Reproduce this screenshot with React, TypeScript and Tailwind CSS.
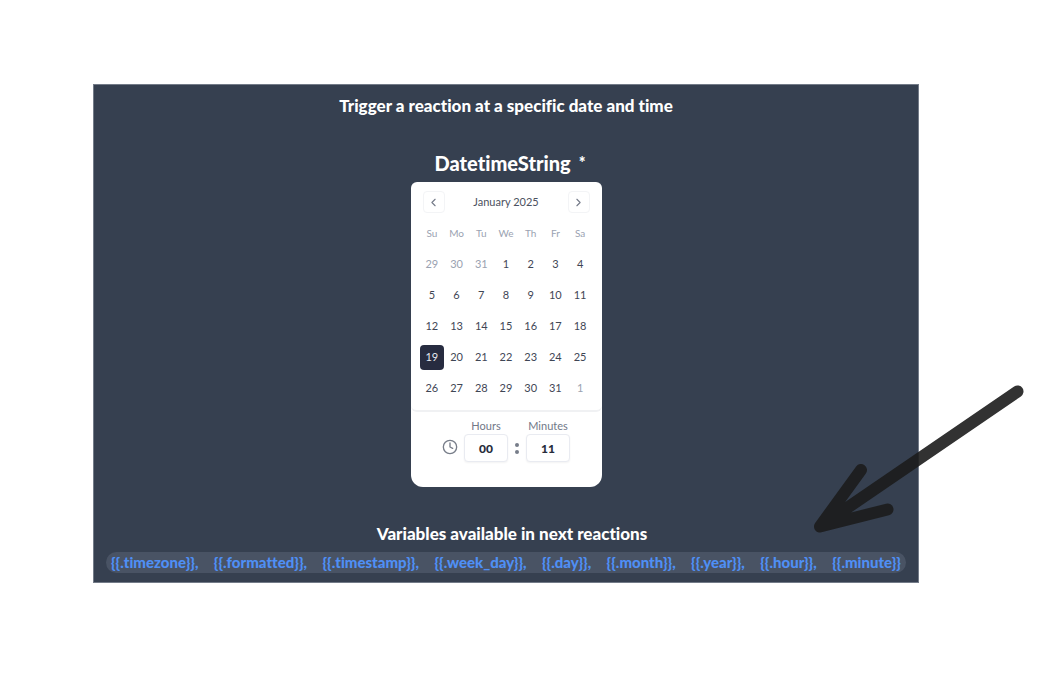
import { ChevronLeft, ChevronRight, Clock } from "lucide-react";

const weekdays = ["Su", "Mo", "Tu", "We", "Th", "Fr", "Sa"];

const weeks = [
  [29, 30, 31, 1, 2, 3, 4],
  [5, 6, 7, 8, 9, 10, 11],
  [12, 13, 14, 15, 16, 17, 18],
  [19, 20, 21, 22, 23, 24, 25],
  [26, 27, 28, 29, 30, 31, 1],
];

const variables = [
  "timezone",
  "formatted",
  "timestamp",
  "week_day",
  "day",
  "month",
  "year",
  "hour",
  "minute",
];

function dayClass(week: number, day: number) {
  if (week === 3 && day === 19) return "bg-[#272c40] text-[#e8eaf0]";
  const outside = (week === 0 && day > 7) || (week === 4 && day < 7);
  return outside ? "text-[#9aa2b1]" : "text-[#3f4655]";
}

function Calendar() {
  return (
    <div className="rounded-md border-b-2 border-[#f0f1f3] px-[9px] pt-[9px] pb-[9px]">
      <div className="flex items-center justify-between px-[3px]">
        <button
          aria-label="Previous month"
          className="flex size-[22px] items-center justify-center rounded border border-[#f3f4f6] text-[#747a88]"
        >
          <ChevronLeft size={13} />
        </button>
        <h3 className="text-[11px] leading-5 text-[#4b5160]">January 2025</h3>
        <button
          aria-label="Next month"
          className="flex size-[22px] items-center justify-center rounded border border-[#f3f4f6] text-[#747a88]"
        >
          <ChevronRight size={13} />
        </button>
      </div>
      <table className="mt-[10px] w-full table-fixed border-collapse text-center">
        <thead>
          <tr className="h-[23px] align-top">
            {weekdays.map((name) => (
              <th key={name} className="p-0 text-[10px] leading-5 font-normal text-[#9aa2b1]">
                {name}
              </th>
            ))}
          </tr>
        </thead>
        <tbody>
          {weeks.map((days, week) => (
            <tr key={week} className="h-[31px]">
              {days.map((day) => (
                <td key={day} className="p-0 pt-[6px]">
                  <button
                    className={`block h-[25px] w-full rounded text-[11px] ${dayClass(week, day)}`}
                  >
                    {day}
                  </button>
                </td>
              ))}
            </tr>
          ))}
        </tbody>
      </table>
    </div>
  );
}

function TimeField({ id, label, value }: { id: string; label: string; value: string }) {
  return (
    <div className="flex w-11 flex-col items-center">
      <label htmlFor={id} className="text-[11px] leading-4 text-[#717887]">
        {label}
      </label>
      <input
        id={id}
        defaultValue={value}
        className="h-7 w-11 rounded border border-[#e9ebf1] bg-white text-center text-[12px] font-black text-[#272c3b] shadow-xs"
      />
    </div>
  );
}

export default function App() {
  return (
    <main className="min-h-screen bg-white pt-[84px] pr-[139px] pb-[90px] pl-[93px] font-['Lato',sans-serif] [font-variant-ligatures:none]">
      <section className="relative flex flex-col items-center border border-[#737b88] bg-[#364050] px-3 pt-[9px] pb-[9px] text-white">
        <p className="text-[17px] leading-6 font-black">
          Trigger a reaction at a specific date and time
        </p>
        <h2 className="mt-[31px] flex items-center gap-2 pl-2 text-[20px] leading-7 font-black">
          DatetimeString <span className="text-[16px]">*</span>
        </h2>
        <div className="mt-[5px] w-[191px] rounded-t-md rounded-b-xl bg-white">
          <Calendar />
          <div className="flex items-end justify-center gap-[6px] pt-[6px] pb-[25px]">
            <Clock size={16} strokeWidth={2} className="mb-[7px] text-[#777d89]" />
            <TimeField id="hours" label="Hours" value="00" />
            <span className="flex h-7 w-[6px] flex-col items-center justify-center gap-[3px]">
              <span className="size-1 rounded-full bg-[#777d89]" />
              <span className="size-1 rounded-full bg-[#777d89]" />
            </span>
            <TimeField id="minutes" label="Minutes" value="11" />
          </div>
        </div>
        <h3 className="mt-[35px] pl-3 text-[17px] leading-6 font-black">
          Variables available in next reactions
        </h3>
        <p className="mt-[6px] flex w-full justify-between rounded-full bg-[#495364] px-[5px] text-[15px] leading-[21px] font-black whitespace-nowrap text-[#4f8ff5]">
          {variables.map((name, index) => (
            <span key={name}>{`{{.${name}}}${index < variables.length - 1 ? "," : ""}`}</span>
          ))}
        </p>
        <svg
          aria-hidden="true"
          viewBox="0 0 220 160"
          className="pointer-events-none absolute right-[-112px] bottom-[42px] h-40 w-[220px]"
          fill="none"
          stroke="#1c1c1c"
          strokeWidth="12"
          strokeLinecap="round"
          strokeLinejoin="round"
          opacity="0.9"
        >
          <path d="M207.5 11.5 L10 146.5 M51 90 L10 146.5 L77.5 129.5" />
        </svg>
      </section>
    </main>
  );
}
